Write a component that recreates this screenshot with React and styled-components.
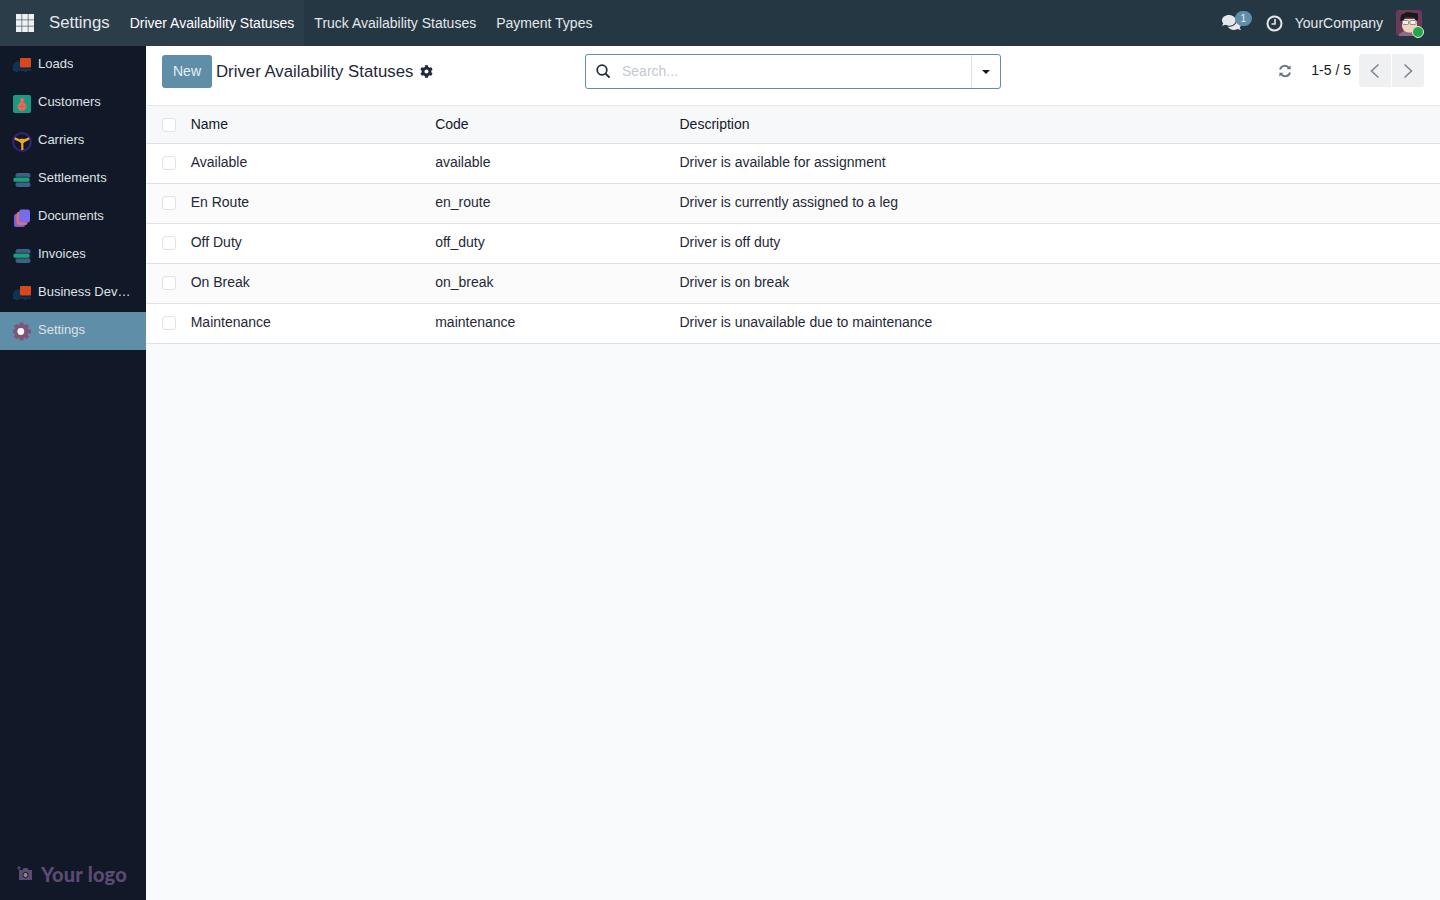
import React from "react";
import styled, { createGlobalStyle } from "styled-components";
import { FaCog, FaComments } from "react-icons/fa";

const Global = createGlobalStyle`
  html, body { margin: 0; padding: 0; height: 100%; }
  body {
    font-family: "Liberation Sans", Arial, sans-serif;
    font-size: 14px;
    color: #111827;
    background: #f9fafb;
    overflow: hidden;
  }
`;

const Page = styled.div`
  width: 1440px;
  height: 900px;
  display: flex;
  flex-direction: column;
`;

const TopBar = styled.header`
  height: 46px;
  flex: none;
  background: #243742;
  display: flex;
  align-items: stretch;
  color: #fff;
`;

const AppsButton = styled.div`
  width: 49px;
  display: flex;
  align-items: center;
  justify-content: center;
  background: #2b3d49;
`;

const BrandName = styled.div`
  display: flex;
  align-items: center;
  background: #2b3d49;
  font-size: 16.8px;
  color: #e5e7eb;
  padding-right: 10px;
`;

const MenuItem = styled.div`
  display: flex;
  align-items: center;
  padding: 0 10px;
  font-size: 14px;
  color: ${(p) => (p.$active ? "#ffffff" : "#e5e7eb")};
  background: ${(p) => (p.$active ? "#2b3d49" : "transparent")};
`;

const Systray = styled.div`
  margin-left: auto;
  display: flex;
  align-items: center;
  padding-right: 18px;
  color: #e5e7eb;
`;

const ChatIcon = styled.div`
  position: relative;
  width: 32px;
  height: 24px;
  margin-right: 12px;
  display: flex;
  align-items: flex-end;
  padding-bottom: 3px;
  box-sizing: border-box;
`;

const Badge = styled.span`
  position: absolute;
  left: 13px;
  top: 0;
  width: 17px;
  height: 15px;
  border-radius: 8px;
  background: #5f8ea9;
  color: #e5e7eb;
  font-size: 11px;
  line-height: 15px;
  text-align: center;
`;

const ClockWrap = styled.div`
  display: flex;
  margin-right: 12px;
`;

const Company = styled.span`
  font-size: 14px;
  margin-right: 13px;
`;

const Avatar = styled.div`
  position: relative;
  width: 26px;
  height: 26px;
  display: flex;
`;

const OnlineDot = styled.span`
  position: absolute;
  right: -2px;
  bottom: -2px;
  width: 10px;
  height: 10px;
  border-radius: 50%;
  background: #22a745;
  border: 1px solid #e5e7eb;
`;

const Body = styled.div`
  flex: 1;
  display: flex;
  min-height: 0;
`;

const Sidebar = styled.nav`
  width: 146px;
  flex: none;
  background: #111827;
  display: flex;
  flex-direction: column;
`;

const SideItem = styled.div`
  height: 38px;
  display: flex;
  align-items: center;
  padding: 0 13px 3px;
  gap: 7px;
  font-size: 13px;
  color: #dee2e6;
  background: ${(p) => (p.$active ? "#5f8ea9" : "transparent")};
  box-sizing: border-box;
`;

const SideIcon = styled.span`
  width: 18px;
  height: 18px;
  flex: none;
  display: flex;
  align-items: center;
  justify-content: center;
  position: relative;
  top: 2px;
`;

const SideLabel = styled.span`
  overflow: hidden;
  white-space: nowrap;
  text-overflow: ellipsis;
`;

const LogoRow = styled.div`
  margin-top: auto;
  height: 50px;
  display: flex;
  align-items: center;
  padding: 0 0 3px 17px;
  gap: 8px;
  box-sizing: border-box;
  color: #5c4a74;
  font-family: Lato, sans-serif;
  font-weight: 900;
  font-size: 20px;
  letter-spacing: 0.2px;
`;

const Main = styled.main`
  flex: 1;
  min-width: 0;
  display: flex;
  flex-direction: column;
  background: #f9fafb;
`;

const ControlPanel = styled.div`
  height: 59px;
  flex: none;
  background: #fff;
  border-bottom: 1px solid #e5e7eb;
  display: grid;
  grid-template-columns: 423px 416px 1fr;
  padding: 0 16px;
  align-items: center;
`;

const TitleGroup = styled.div`
  display: flex;
  align-items: center;
  position: relative;
  top: -4px;
`;

const NewButton = styled.button`
  height: 33px;
  width: 50px;
  border: 0;
  border-radius: 3px;
  background: #5f8ea9;
  color: #e5eef3;
  font: 14px "Liberation Sans", Arial, sans-serif;
  padding: 0 0 2px;
  margin-right: 4px;
`;

const Title = styled.span`
  font-size: 16.8px;
  color: #1f2937;
  margin-right: 7px;
`;

const SearchBox = styled.div`
  height: 33px;
  border: 1px solid #5f8ea9;
  border-radius: 3px;
  display: flex;
  align-items: center;
  position: relative;
  top: -4px;
`;

const SearchIcon = styled.span`
  display: flex;
  width: 36px;
  padding-left: 10px;
  box-sizing: border-box;
`;

const Placeholder = styled.span`
  flex: 1;
  color: #c4c9d1;
  font-size: 14px;
  position: relative;
  top: -1px;
`;

const Caret = styled.div`
  width: 28px;
  align-self: stretch;
  border-left: 1px solid #dee2e6;
  display: flex;
  align-items: center;
  justify-content: center;
  &::before {
    content: "";
    border-style: solid;
    border-width: 4px 4px 0;
    border-color: #111827 transparent transparent;
  }
`;

const Pager = styled.div`
  display: flex;
  align-items: center;
  justify-content: flex-end;
  position: relative;
  top: -5px;
`;

const Refresh = styled.span`
  display: flex;
  margin-right: 19px;
`;

const PagerText = styled.span`
  font-size: 14px;
  color: #111827;
  margin-right: 8px;
  position: relative;
  top: -1px;
`;

const PagerButton = styled.button`
  width: 32px;
  height: 33px;
  border: 0;
  padding: 0;
  margin-left: ${(p) => (p.$right ? "1px" : "0")};
  background: #eef0f2;
  border-radius: ${(p) => (p.$right ? "0 3px 3px 0" : "3px 0 0 3px")};
  display: flex;
  align-items: center;
  justify-content: center;
`;

const Table = styled.div`
  display: flex;
  flex-direction: column;
`;

const Row = styled.div`
  height: ${(p) => (p.$head ? "37px" : "39px")};
  display: grid;
  grid-template-columns: 28.7px 244.5px 244.3px 1fr;
  align-items: center;
  padding-left: 16px;
  border-bottom: 1px solid #dee2e6;
  background: ${(p) => (p.$head ? "#f7f8fa" : p.$striped ? "#fbfbfc" : "#fff")};
  color: ${(p) => (p.$head ? "#111827" : "#1f2937")};
  font-size: 14px;
  & > span { position: relative; top: ${(p) => (p.$head ? "-1px" : "-2px")}; }
  & > i { position: relative; top: ${(p) => (p.$head ? "0" : "-1px")}; }
`;

const Check = styled.i`
  display: block;
  width: 12px;
  height: 12px;
  border: 1px solid #dee2e6;
  border-radius: 3px;
  background: #fff;
`;

const Truck = () => (
  <svg width="18" height="15" viewBox="0 0 18 15">
    <path d="M0 7 3 3.500h4V13H5.600a2.100 2.100 0 0 1-4 0H0z" fill="#0f3350" />
    <path d="M7 10.500h11V13h-3.400a2.100 2.100 0 0 1-4 0H7z" fill="#0f3350" />
    <rect x="7" y="0" width="11" height="9.500" rx="1" fill="#d9481c" />
  </svg>
);

const Person = () => (
  <svg width="18" height="18" viewBox="0 0 18 18">
    <rect width="18" height="18" rx="2" fill="#1a9a80" />
    <circle cx="9" cy="5" r="2" fill="#ea6a5c" />
    <path d="M8 6h2v2.500H8z" fill="#ea6a5c" />
    <circle cx="9" cy="11.500" r="4.400" fill="#ea6a5c" />
    <path d="M5.500 11.500h7M9 8v7" stroke="#c9504a" strokeWidth=".7" />
  </svg>
);

const Wheel = () => (
  <svg width="20" height="20" viewBox="0 0 20 20" style={{ flex: "none" }}>
    <circle cx="10" cy="10" r="8.800" fill="none" stroke="#33227a" strokeWidth="2.200" />
    <path
      d="M2.400 7.400 3 5.200 8 7.200h4l5-2 .6 2.200-5.200 2.900-1 1V18H9.200v-6.700l-1-1z"
      fill="#eaa920"
    />
    <circle cx="10" cy="9" r="2.400" fill="#eaa920" />
  </svg>
);

const Stack = () => (
  <svg width="18" height="14" viewBox="0 0 18 14">
    <rect x="2.500" y="0" width="15" height="5" rx="2.500" fill="#3f5f86" />
    <rect x="2.500" y="9" width="15" height="5" rx="2.500" fill="#3f5f86" />
    <rect x="0" y="4.200" width="17" height="5" rx="2.500" fill="#17a07a" stroke="#111827" strokeWidth=".6" />
  </svg>
);

const Docs = () => (
  <svg width="18" height="18" viewBox="0 0 18 18">
    <rect x="1" y="5" width="11" height="13" rx="2" fill="#7a5fd8" />
    <rect x="3.500" y="3" width="11" height="13" rx="2" fill="#d9707a" />
    <rect x="6" y="0.500" width="11" height="13" rx="2.500" fill="#7a6ce8" />
  </svg>
);

const Gear = () => (
  <svg width="20" height="20" viewBox="0 0 20 20" style={{ flex: "none" }}>
    <g fill="#7f5478">
      <circle cx="9.500" cy="9.500" r="7" />
      <rect x="7.500" y="0.500" width="4" height="18" />
      <rect x="1" y="7.500" width="18" height="4" />
      <rect x="7.500" y="0.500" width="4" height="18" transform="rotate(45 9.500 9.500)" />
      <rect x="7.500" y="0.500" width="4" height="18" transform="rotate(-45 9.500 9.500)" />
    </g>
    <circle cx="8.800" cy="9.500" r="3.400" fill="#fff" />
  </svg>
);

const Apps = () => (
  <svg width="18" height="18" viewBox="0 0 18 18" fill="#eef0f2">
    {[0, 6.200, 12.400].map((x) =>
      [0, 6.200, 12.400].map((y) => (
        <rect key={`${x}-${y}`} x={x} y={y} width="5.600" height="5.600" />
      ))
    )}
  </svg>
);

const Clock = () => (
  <svg width="17" height="17" viewBox="0 0 17 17" fill="none" stroke="#e5e7eb" strokeWidth="2">
    <circle cx="8.500" cy="8.500" r="7" />
    <path d="M9 4v5H5.500" strokeWidth="1.600" />
  </svg>
);

const Face = () => (
  <svg width="26" height="26" viewBox="0 0 26 26">
    <rect width="26" height="26" rx="3" fill="#6b3a58" />
    <path d="M3 26v-2l5-3h10l5 3v2z" fill="#8f6a86" />
    <path d="M6 9h15v7a6.500 6.500 0 0 1-6.500 6.500h-2A6.500 6.500 0 0 1 6 16z" fill="#f5d3bb" />
    <path d="M4 11 5 5l6-3 11 1.500L22 10l-2 1-2-3.500H9L7.500 11z" fill="#17191d" />
    <rect x="6.500" y="10.500" width="6" height="4" rx="1" fill="#eef0f2" stroke="#777" strokeWidth=".8" />
    <rect x="14" y="10.500" width="6" height="4" rx="1" fill="#eef0f2" stroke="#777" strokeWidth=".8" />
  </svg>
);

const CameraLogo = () => (
  <svg width="16" height="16" viewBox="0 0 16 16">
    <path d="M2 4h3.500l1-2h4l1 2H15v10H2z" fill="#5c4a74" />
    <circle cx="8.500" cy="9" r="2.600" fill="#8a8a8a" stroke="#111827" strokeWidth="1" />
    <path d="M0 2h4M2 0v4" stroke="#5c4a74" strokeWidth="1.200" />
  </svg>
);

const Magnifier = () => (
  <svg width="15" height="15" viewBox="0 0 15 15" fill="none" stroke="#1f2937" strokeWidth="1.700">
    <circle cx="6" cy="6" r="4.800" />
    <path d="m9.600 9.600 4 4" strokeWidth="2" />
  </svg>
);

const RefreshIcon = () => (
  <svg width="14" height="14" viewBox="0 0 14 14" fill="none" stroke="#6b7280" strokeWidth="1.900">
    <path d="M2 5.600A5 5 0 0 1 11 4" />
    <path d="M12 8.400A5 5 0 0 1 3 10" />
    <path d="M12.600 1.200v4H8.600z" fill="#6b7280" stroke="none" />
    <path d="M1.400 12.800v-4h4z" fill="#6b7280" stroke="none" />
  </svg>
);

const Chevron = ({ right }) => (
  <svg width="12" height="16" viewBox="0 0 12 16" fill="none" stroke="#7d8794" strokeWidth="1.600">
    <path d={right ? "M2.500 1.500 9.500 8l-7 6.500" : "M9.500 1.500 2.500 8l7 6.500"} />
  </svg>
);

const sideItems = [
  { label: "Loads", icon: <Truck /> },
  { label: "Customers", icon: <Person /> },
  { label: "Carriers", icon: <Wheel /> },
  { label: "Settlements", icon: <Stack /> },
  { label: "Documents", icon: <Docs /> },
  { label: "Invoices", icon: <Stack /> },
  { label: "Business Development", icon: <Truck /> },
  { label: "Settings", icon: <Gear />, active: true },
];

const rows = [
  ["Available", "available", "Driver is available for assignment"],
  ["En Route", "en_route", "Driver is currently assigned to a leg"],
  ["Off Duty", "off_duty", "Driver is off duty"],
  ["On Break", "on_break", "Driver is on break"],
  ["Maintenance", "maintenance", "Driver is unavailable due to maintenance"],
];

export default function App() {
  return (
    <Page>
      <Global />
      <TopBar>
        <AppsButton>
          <Apps />
        </AppsButton>
        <BrandName>Settings</BrandName>
        <MenuItem $active>Driver Availability Statuses</MenuItem>
        <MenuItem>Truck Availability Statuses</MenuItem>
        <MenuItem>Payment Types</MenuItem>
        <Systray>
          <ChatIcon>
            <FaComments size={19} color="#e5e7eb" />
            <Badge>1</Badge>
          </ChatIcon>
          <ClockWrap>
            <Clock />
          </ClockWrap>
          <Company>YourCompany</Company>
          <Avatar>
            <Face />
            <OnlineDot />
          </Avatar>
        </Systray>
      </TopBar>
      <Body>
        <Sidebar>
          {sideItems.map((item) => (
            <SideItem key={item.label} $active={item.active}>
              <SideIcon>{item.icon}</SideIcon>
              <SideLabel>{item.label}</SideLabel>
            </SideItem>
          ))}
          <LogoRow>
            <CameraLogo />
            Your logo
          </LogoRow>
        </Sidebar>
        <Main>
          <ControlPanel>
            <TitleGroup>
              <NewButton>New</NewButton>
              <Title>Driver Availability Statuses</Title>
              <FaCog size={13} color="#1f2937" />
            </TitleGroup>
            <SearchBox>
              <SearchIcon>
                <Magnifier />
              </SearchIcon>
              <Placeholder>Search...</Placeholder>
              <Caret />
            </SearchBox>
            <Pager>
              <Refresh>
                <RefreshIcon />
              </Refresh>
              <PagerText>1-5 / 5</PagerText>
              <PagerButton>
                <Chevron />
              </PagerButton>
              <PagerButton $right>
                <Chevron right />
              </PagerButton>
            </Pager>
          </ControlPanel>
          <Table>
            <Row $head>
              <Check />
              <span>Name</span>
              <span>Code</span>
              <span>Description</span>
            </Row>
            {rows.map(([name, code, desc], i) => (
              <Row key={code} $striped={i % 2 === 1}>
                <Check />
                <span>{name}</span>
                <span>{code}</span>
                <span>{desc}</span>
              </Row>
            ))}
          </Table>
        </Main>
      </Body>
    </Page>
  );
}
